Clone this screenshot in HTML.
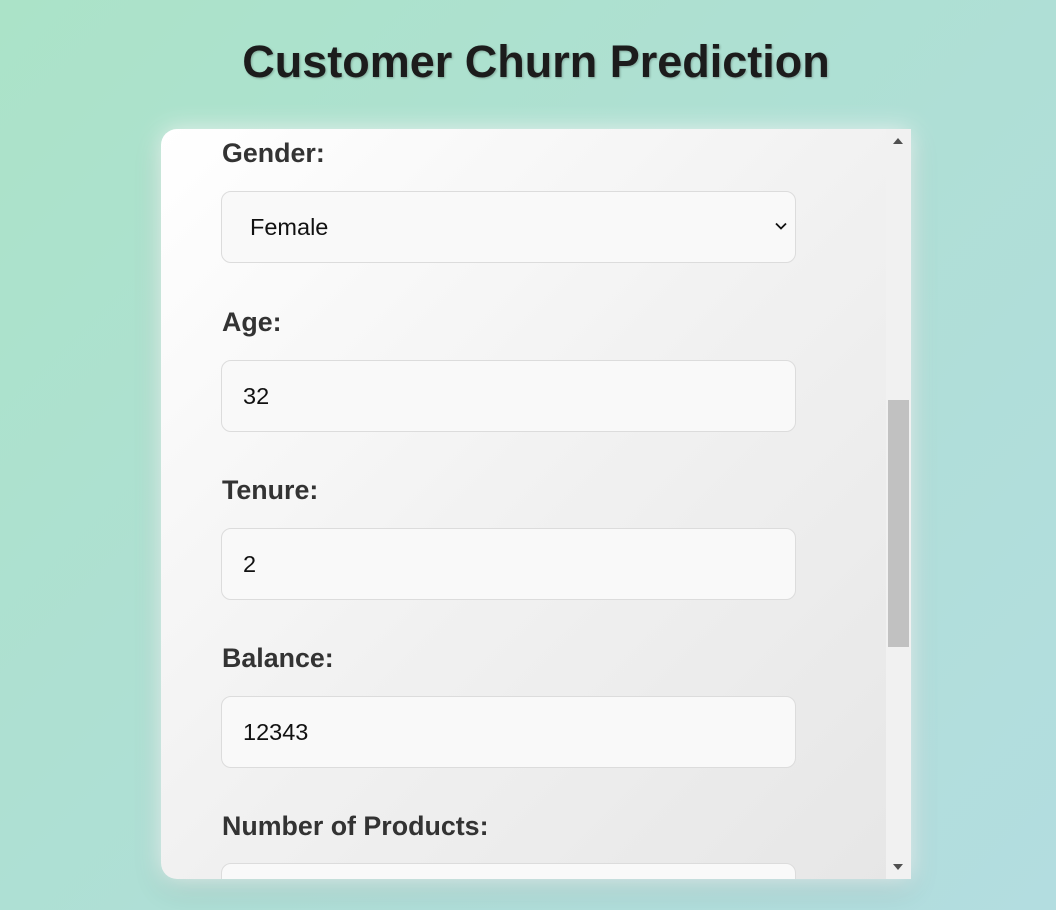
<!DOCTYPE html>
<html><head><style>
html,body{margin:0;width:1056px;height:910px;overflow:hidden}
body{background:linear-gradient(135deg,#abe3c8 0%,#afdfd6 55%,#b3dde0 100%);font-family:"Liberation Sans",Arial,sans-serif;position:relative}
h1{position:absolute;top:36px;left:0;width:1072px;text-align:center;margin:0;font-size:45px;font-weight:bold;color:#1c1c1c;text-shadow:1px 1px 2px rgba(0,0,0,.25)}
.card{position:absolute;left:161px;top:129px;width:750px;height:750px;border-radius:16px 0 0 16px;background:linear-gradient(135deg,#ffffff 0%,#f1f1f1 50%,#e6e6e6 100%);box-shadow:0 0 25px rgba(255,255,255,.8),0 10px 30px rgba(0,0,0,.12);overflow:hidden}
.sb{position:absolute;right:0;top:0;width:25px;height:750px;background:#f1f1f1}
.thumb{position:absolute;left:2px;top:271px;width:21px;height:247px;background:#c1c1c1}
.up,.dn{position:absolute;left:7px;width:0;height:0;border-left:5px solid transparent;border-right:5px solid transparent}
.up{top:9px;border-bottom:6px solid #505050}
.dn{bottom:9px;border-top:6px solid #505050}
.lab{position:absolute;left:61px;font-size:26.8px;font-weight:bold;color:#333}
.in{position:absolute;left:60px;width:573px;height:70px;border:1px solid #dcdcdc;border-radius:10px;background:#f9f9f9;font-size:23.5px;color:#111;line-height:70px;box-sizing:content-box}
.in span{position:absolute;left:21px}
.chev{position:absolute;right:8px;top:30px}
</style></head><body>
<h1>Customer Churn Prediction</h1>
<div class="card">
<div class="lab" style="top:9px">Gender:</div>
<div class="in" style="top:62px"><span style="left:28px">Female</span><svg class="chev" width="12" height="8" viewBox="0 0 12 8"><path d="M1 1.5L6 6.5L11 1.5" fill="none" stroke="#111" stroke-width="1.8"/></svg></div>
<div class="lab" style="top:178px">Age:</div>
<div class="in" style="top:231px"><span>32</span></div>
<div class="lab" style="top:346px">Tenure:</div>
<div class="in" style="top:399px"><span>2</span></div>
<div class="lab" style="top:514px">Balance:</div>
<div class="in" style="top:567px"><span>12343</span></div>
<div class="lab" style="top:682px">Number of Products:</div>
<div class="in" style="top:734px"></div>
<div class="sb"><div class="up"></div><div class="thumb"></div><div class="dn"></div></div>
</div>
</body></html>
